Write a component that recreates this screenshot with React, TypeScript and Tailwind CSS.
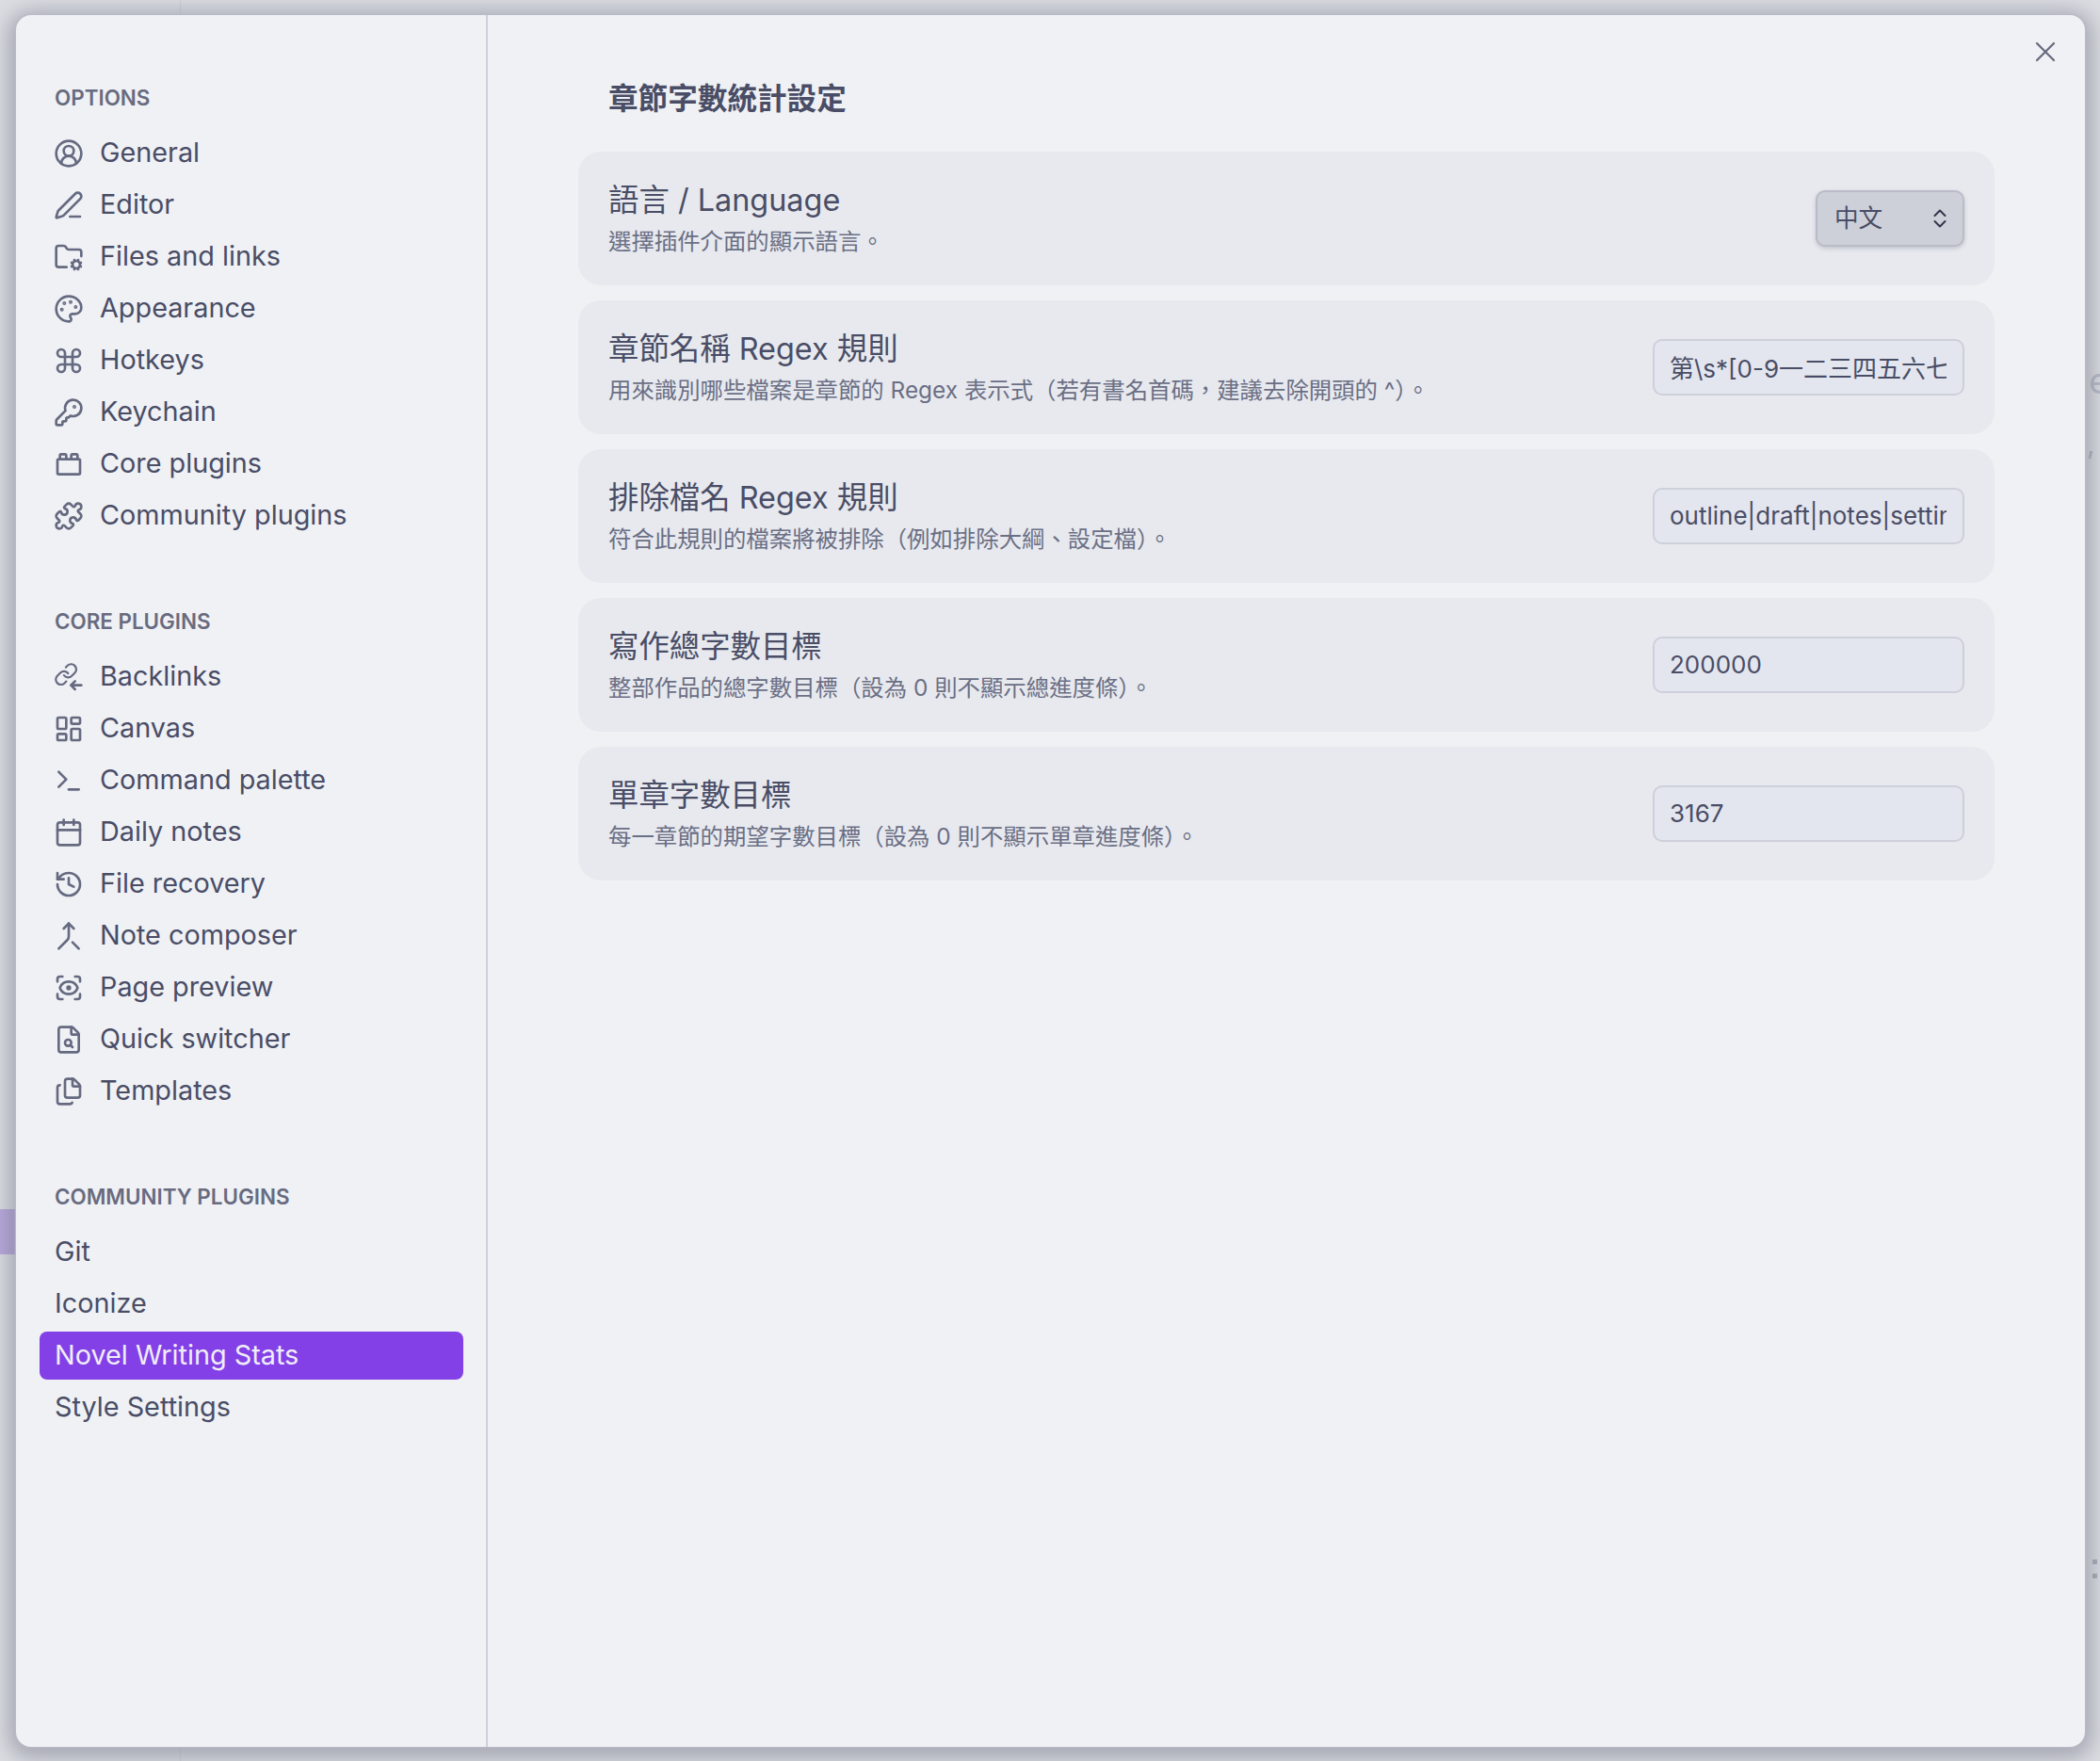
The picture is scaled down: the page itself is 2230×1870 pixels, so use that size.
import { CircleUserRound, PenLine, FolderCog, Palette, Command, KeyRound, ToyBrick, Puzzle, LayoutDashboard, Terminal, Calendar, History, Merge, ScanEye, Files, X } from "lucide-react";
import type { ComponentType, SVGProps } from "react";

type IconType = ComponentType<SVGProps<SVGSVGElement> & { size?: number; strokeWidth?: number }>;

const BacklinksIcon = (props: SVGProps<SVGSVGElement>) => (
  <svg viewBox="0 0 24 24" fill="none" stroke="currentColor" strokeLinecap="round" strokeLinejoin="round" {...props}>
    <g transform="scale(0.82)">
      <path d="M10 13a5 5 0 0 0 7.54.54l3-3a5 5 0 0 0-7.07-7.07l-1.72 1.71" />
      <path d="M14 11a5 5 0 0 0-7.54-.54l-3 3a5 5 0 0 0 7.07 7.07l1.71-1.71" />
    </g>
    <path d="M22 18.5h-8" />
    <path d="m17 15.3-3.2 3.2 3.2 3.2" />
  </svg>
);

const QuickSwitcherIcon = (props: SVGProps<SVGSVGElement>) => (
  <svg viewBox="0 0 24 24" fill="none" stroke="currentColor" strokeLinecap="round" strokeLinejoin="round" {...props}>
    <path d="M6 22a2 2 0 0 1-2-2V4a2 2 0 0 1 2-2h8a2.4 2.4 0 0 1 1.7.7l3.6 3.6A2.4 2.4 0 0 1 20 8v12a2 2 0 0 1-2 2z" />
    <path d="M14 2v5a1 1 0 0 0 1 1h5" />
    <circle cx="11.5" cy="14.5" r="2.5" />
    <path d="M13.3 16.3 15 18" />
  </svg>
);

const optionItems: { label: string; icon: IconType }[] = [
  { label: "General", icon: CircleUserRound },
  { label: "Editor", icon: PenLine },
  { label: "Files and links", icon: FolderCog },
  { label: "Appearance", icon: Palette },
  { label: "Hotkeys", icon: Command },
  { label: "Keychain", icon: KeyRound },
  { label: "Core plugins", icon: ToyBrick },
  { label: "Community plugins", icon: Puzzle },
];

const coreItems: { label: string; icon: IconType }[] = [
  { label: "Backlinks", icon: BacklinksIcon },
  { label: "Canvas", icon: LayoutDashboard },
  { label: "Command palette", icon: Terminal },
  { label: "Daily notes", icon: Calendar },
  { label: "File recovery", icon: History },
  { label: "Note composer", icon: Merge },
  { label: "Page preview", icon: ScanEye },
  { label: "Quick switcher", icon: QuickSwitcherIcon },
  { label: "Templates", icon: Files },
];

const communityItems = ["Git", "Iconize", "Novel Writing Stats", "Style Settings"];

const settings = [
  { title: "章節名稱 Regex 規則", desc: "用來識別哪些檔案是章節的 Regex 表示式（若有書名首碼，建議去除開頭的 ^）。", value: "第\\s*[0-9一二三四五六七八九十百千]+[章節回]" },
  { title: "排除檔名 Regex 規則", desc: "符合此規則的檔案將被排除（例如排除大綱、設定檔）。", value: "outline|draft|notes|settings" },
  { title: "寫作總字數目標", desc: "整部作品的總字數目標（設為 0 則不顯示總進度條）。", value: "200000" },
  { title: "單章字數目標", desc: "每一章節的期望字數目標（設為 0 則不顯示單章進度條）。", value: "3167" },
];

const SectionLabel = ({ children }: { children: string }) => (
  <div className="h-[36px] pl-[16px] mb-[15px] flex items-center text-[22.4px] font-semibold text-[#686b80] uppercase">{children}</div>
);

const NavRow = ({ label, icon: Icon }: { label: string; icon: IconType }) => (
  <div className="h-[51px] mb-[4px] pl-[15px] flex items-center text-[#4a4d66]">
    <span className="w-[49px] shrink-0 text-[#666a80]">
      <Icon width={32} height={32} strokeWidth={2} />
    </span>
    <span className="text-[28.8px] leading-none">{label}</span>
  </div>
);

const Row = ({ title, desc, children }: { title: string; desc: string; children: React.ReactNode }) => (
  <div className="h-[142px] px-[32px] rounded-[24px] bg-[#e7e9ee] flex items-center justify-between">
    <div className="flex flex-col pt-[2px]">
      <div className="text-[32.4px] leading-[46px] text-[#4a4d66]">{title}</div>
      <div className="text-[24.4px] leading-[40px] text-[#6b6f85]">{desc}</div>
    </div>
    {children}
  </div>
);

export default function App() {
  return (
    <div className="relative w-[2230px] h-[1870px] overflow-hidden bg-[#dcdee3] pl-[17px] pt-[16px] font-['Inter','Noto_Sans_CJK_TC',sans-serif]">
      <div className="absolute left-[191px] top-0 h-full w-[1px] bg-[#cfd1d7]" />
      <div className="absolute left-0 top-[1284px] w-[16px] h-[48px] bg-[#b8a8dc]" />
      <div className="absolute left-[2218px] top-[385px] text-[38px] leading-none text-[#b9bbc6]">e</div>
      <div className="absolute left-[2216px] top-[456px] text-[30px] leading-none text-[#b0b2bf]">,</div>
      <div className="absolute left-[2222px] top-[1656px] w-[5px] h-[5px] bg-[#a9abb8]" />
      <div className="absolute left-[2222px] top-[1671px] w-[5px] h-[5px] bg-[#a9abb8]" />

      <div className="relative flex w-[2197px] h-[1839px] rounded-[16px] bg-[#eff1f5] overflow-hidden shadow-[0_0_2px_1px_#b9bbc6,0_4px_22px_8px_rgba(110,112,130,0.5)]">
        <aside className="w-[501px] shrink-0 border-r-2 border-[#ced0da] pt-[70px] pl-[25px] pr-[24px]">
          <SectionLabel>Options</SectionLabel>
          {optionItems.map((item) => (
            <NavRow key={item.label} {...item} />
          ))}
          <div className="h-[65px]" />
          <SectionLabel>Core plugins</SectionLabel>
          {coreItems.map((item) => (
            <NavRow key={item.label} {...item} />
          ))}
          <div className="h-[65px]" />
          <SectionLabel>Community plugins</SectionLabel>
          {communityItems.map((label) => (
            <div
              key={label}
              className={`h-[51px] mb-[4px] pl-[16px] flex items-center rounded-[8px] text-[28.8px] leading-none ${label === "Novel Writing Stats" ? "bg-[#8340e6] text-[#f0edfb]" : "text-[#4a4d66]"}`}
            >
              {label}
            </div>
          ))}
        </aside>

        <main className="flex-1 pl-[96px] pr-[96px]">
          <h1 className="h-[145px] pl-[32px] pt-[68px] text-[31.6px] leading-[42px] font-semibold text-[#4a4d66]">章節字數統計設定</h1>
          <div className="flex flex-col gap-[16px]">
            <Row title="語言 / Language" desc="選擇插件介面的顯示語言。">
              <div className="w-[158px] h-[60px] pl-[18px] pr-[16px] flex items-center justify-between rounded-[10px] border-2 border-[#b9bcc8] bg-[#cdd0d9] shadow-[0_2px_4px_rgba(90,92,110,0.25)] text-[25.6px] text-[#4a4d66]">
                中文
                <svg width="16" height="22" viewBox="0 0 16 22" fill="none" stroke="#33344a" strokeWidth={2} strokeLinecap="round" strokeLinejoin="round">
                  <path d="M2.5 8 8 2.5 13.5 8" />
                  <path d="M2.5 14 8 19.5 13.5 14" />
                </svg>
              </div>
            </Row>
            {settings.map((s) => (
              <Row key={s.title} title={s.title} desc={s.desc}>
                <input
                  readOnly
                  value={s.value}
                  className="w-[331px] h-[60px] pl-[16px] pr-[17px] pb-[2px] rounded-[10px] border-2 border-[#cdd0da] bg-[#e3e6ee] text-[26px] text-[#4a4d66] outline-none"
                />
              </Row>
            ))}
          </div>
        </main>

        <X className="absolute left-[2137px] top-[21px] text-[#686b7f]" width={36} height={36} strokeWidth={1.5} />
      </div>
    </div>
  );
}
